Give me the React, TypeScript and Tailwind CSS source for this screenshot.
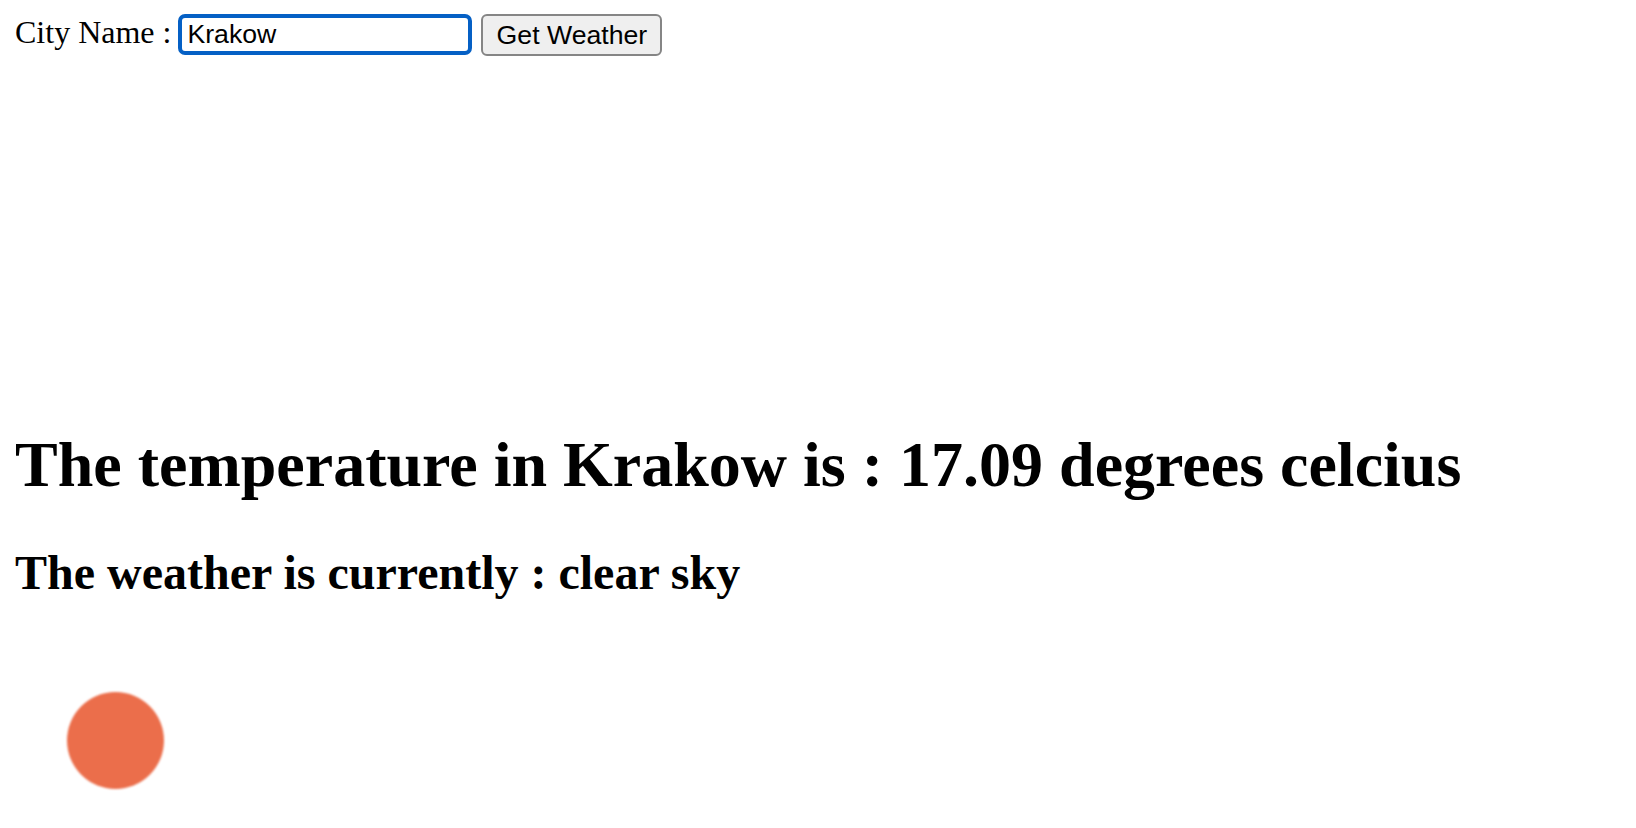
import { useState } from "react";

const SERIF = "font-['Liberation_Serif','Times_New_Roman',serif]";
const SANS = "font-['Liberation_Sans',Arial,sans-serif]";

export default function App() {
  const [city, setCity] = useState("Krakow");

  return (
    <div className={`min-h-screen bg-white px-[15px] pt-[14px] text-black ${SERIF}`}>
      <div className="flex items-start">
        <span className="text-[32px] leading-[36.8px]">City Name :</span>
        <input
          value={city}
          onChange={(e) => setCity(e.target.value)}
          className={`ml-[7px] h-[41px] w-[294px] rounded-[7px] border-4 border-[#0560c5] bg-white pl-[5px] text-[26.67px] leading-none outline-none ${SANS}`}
        />
        <button
          type="button"
          className={`ml-[9px] h-[42px] w-[181px] rounded-[6px] border-2 border-[#858585] bg-[#efefef] text-[26.67px] leading-none ${SANS}`}
        >
          Get Weather
        </button>
      </div>

      <h1 className="mt-[372px] text-[64px] font-bold leading-[73.6px]">
        The temperature in {city} is : 17.09 degrees celcius
      </h1>
      <h2 className="mt-[43px] text-[48px] font-bold leading-[55px]">
        The weather is currently : clear sky
      </h2>

      {/* weather icon */}
      <div className="mt-[41px] flex h-[200px] w-[200px] items-center justify-center">
        <div className="h-[97px] w-[97px] rounded-full bg-[#eb6e4b] blur-[1px]" />
      </div>
    </div>
  );
}
